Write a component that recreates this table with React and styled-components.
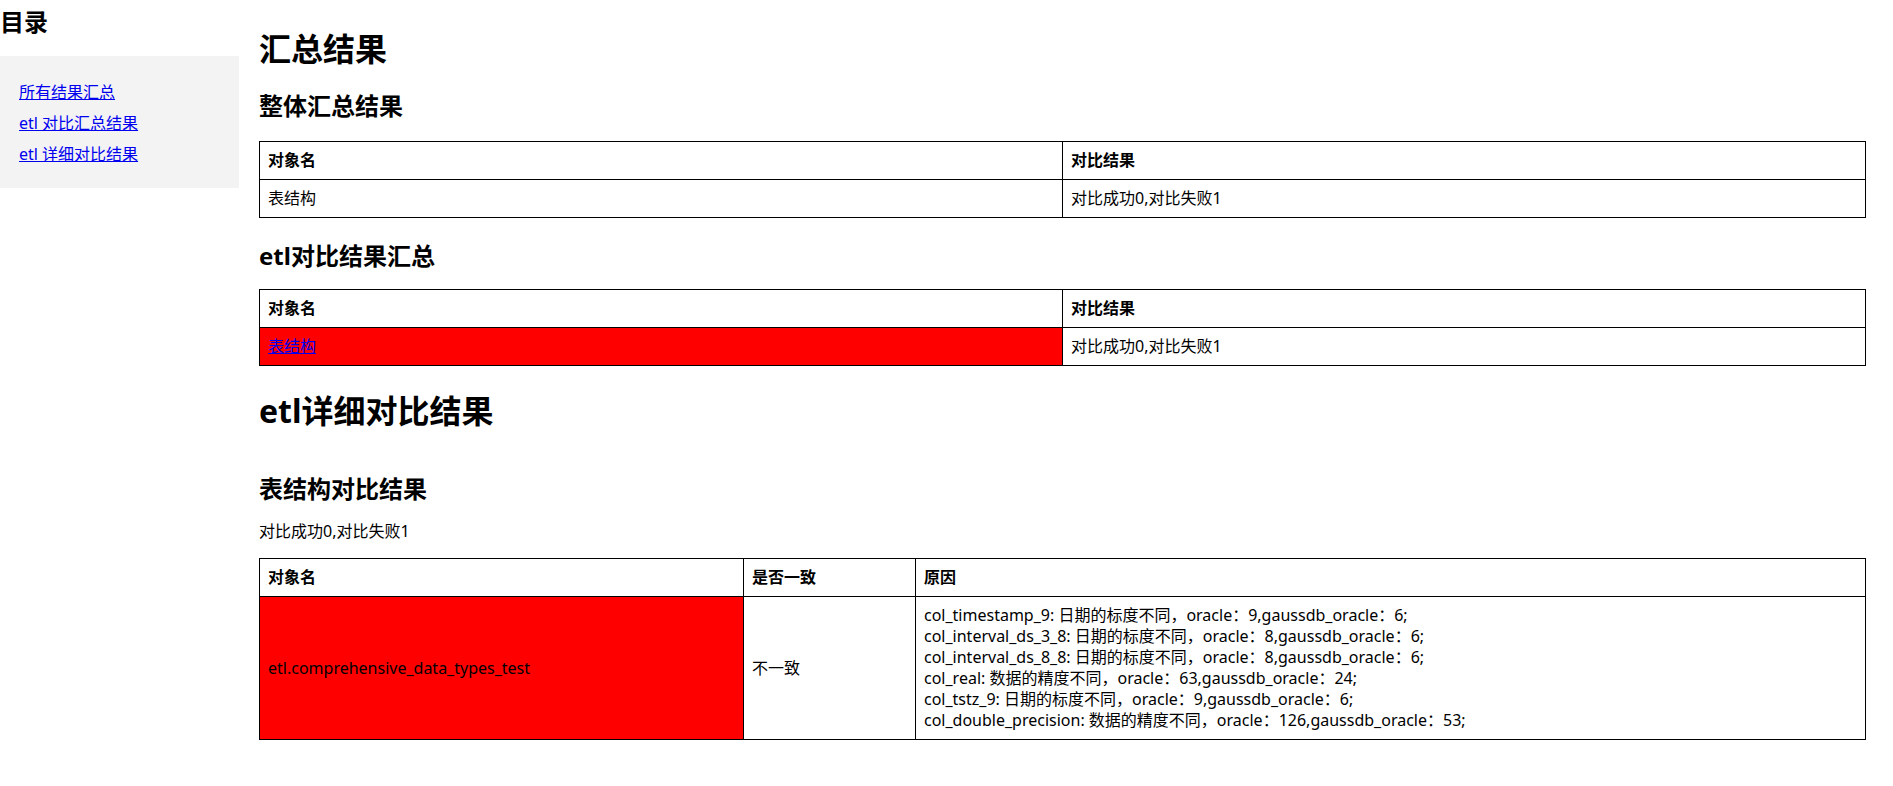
import React from 'react';
import styled, { createGlobalStyle } from 'styled-components';

const GlobalStyle = createGlobalStyle`
  body {
    margin: 0;
    background: #fff;
    color: #000;
    font-family: "Noto Sans", "Noto Sans CJK SC", sans-serif;
    font-size: 16px;
  }
`;

const Page = styled.div`
  display: flex;
  align-items: flex-start;
  min-height: 786px;
`;

const Sidebar = styled.aside`
  width: 239px;
  flex-shrink: 0;
`;

const SidebarTitle = styled.h3`
  margin: 7px 0 19px;
  font-size: 24px;
  line-height: 30px;
  font-weight: 700;
`;

const Nav = styled.nav`
  display: flex;
  flex-direction: column;
  align-items: flex-start;
  background: #f3f3f3;
  padding: 21px 19px 18px;
`;

const NavLink = styled.a`
  color: #0000ee;
  line-height: 31px;
  text-decoration: underline;
`;

const Main = styled.main`
  flex: 1;
  min-width: 0;
  padding: 29px 27px 0 20px;
`;

const PageTitle = styled.h1`
  margin: ${({ $gap }) => $gap || 0}px 0 0;
  font-size: 32px;
  line-height: 40px;
  font-weight: 700;
`;

const SectionTitle = styled.h2`
  margin: ${({ $gap }) => $gap || 0}px 0 0;
  font-size: 24px;
  line-height: 32px;
  font-weight: 700;
`;

const Summary = styled.p`
  margin: ${({ $gap }) => $gap || 0}px 0 0;
  line-height: 21px;
`;

const Table = styled.table`
  width: 100%;
  margin-top: ${({ $gap }) => $gap || 0}px;
  border-collapse: collapse;
  border: 1px solid #000;
  table-layout: fixed;
`;

const Col = styled.col`
  width: ${({ $width }) => $width};
`;

const Th = styled.th`
  border: 1px solid #000;
  padding: 8px;
  line-height: 21px;
  text-align: left;
  font-weight: 700;
`;

const Td = styled.td`
  border: 1px solid #000;
  padding: 8px;
  line-height: 21px;
  vertical-align: middle;
  background: ${({ $failed }) => ($failed ? '#ff0000' : 'transparent')};
`;

const CellLink = styled.a`
  color: #0000ee;
  text-decoration: underline;
`;

const ReasonLine = styled.div`
  white-space: nowrap;
`;

const reasons = [
  'col_timestamp_9: 日期的标度不同，oracle：9,gaussdb_oracle：6;',
  'col_interval_ds_3_8: 日期的标度不同，oracle：8,gaussdb_oracle：6;',
  'col_interval_ds_8_8: 日期的标度不同，oracle：8,gaussdb_oracle：6;',
  'col_real: 数据的精度不同，oracle：63,gaussdb_oracle：24;',
  'col_tstz_9: 日期的标度不同，oracle：9,gaussdb_oracle：6;',
  'col_double_precision: 数据的精度不同，oracle：126,gaussdb_oracle：53;',
];

const App = () => (
  <>
    <GlobalStyle />
    <Page>
      <Sidebar>
        <SidebarTitle>目录</SidebarTitle>
        <Nav>
          <NavLink href="#summary">所有结果汇总</NavLink>
          <NavLink href="#etl-summary">etl 对比汇总结果</NavLink>
          <NavLink href="#etl-detail">etl 详细对比结果</NavLink>
        </Nav>
      </Sidebar>
      <Main>
        <PageTitle id="summary">汇总结果</PageTitle>
        <SectionTitle $gap={21}>整体汇总结果</SectionTitle>
        <Table $gap={19}>
          <colgroup>
            <Col $width="50%" />
            <Col $width="50%" />
          </colgroup>
          <thead>
            <tr>
              <Th>对象名</Th>
              <Th>对比结果</Th>
            </tr>
          </thead>
          <tbody>
            <tr>
              <Td>表结构</Td>
              <Td>对比成功0,对比失败1</Td>
            </tr>
          </tbody>
        </Table>

        <SectionTitle id="etl-summary" $gap={22}>etl对比结果汇总</SectionTitle>
        <Table $gap={17}>
          <colgroup>
            <Col $width="50%" />
            <Col $width="50%" />
          </colgroup>
          <thead>
            <tr>
              <Th>对象名</Th>
              <Th>对比结果</Th>
            </tr>
          </thead>
          <tbody>
            <tr>
              <Td $failed>
                <CellLink href="#table-structure">表结构</CellLink>
              </Td>
              <Td>对比成功0,对比失败1</Td>
            </tr>
          </tbody>
        </Table>

        <PageTitle id="etl-detail" $gap={25}>etl详细对比结果</PageTitle>
        <SectionTitle id="table-structure" $gap={42}>表结构对比结果</SectionTitle>
        <Summary $gap={16}>对比成功0,对比失败1</Summary>
        <Table $gap={16}>
          <colgroup>
            <Col $width="484px" />
            <Col $width="172px" />
            <Col $width="auto" />
          </colgroup>
          <thead>
            <tr>
              <Th>对象名</Th>
              <Th>是否一致</Th>
              <Th>原因</Th>
            </tr>
          </thead>
          <tbody>
            <tr>
              <Td $failed>etl.comprehensive_data_types_test</Td>
              <Td>不一致</Td>
              <Td>
                {reasons.map((line) => (
                  <ReasonLine key={line}>{line}</ReasonLine>
                ))}
              </Td>
            </tr>
          </tbody>
        </Table>
      </Main>
    </Page>
  </>
);

export default App;
